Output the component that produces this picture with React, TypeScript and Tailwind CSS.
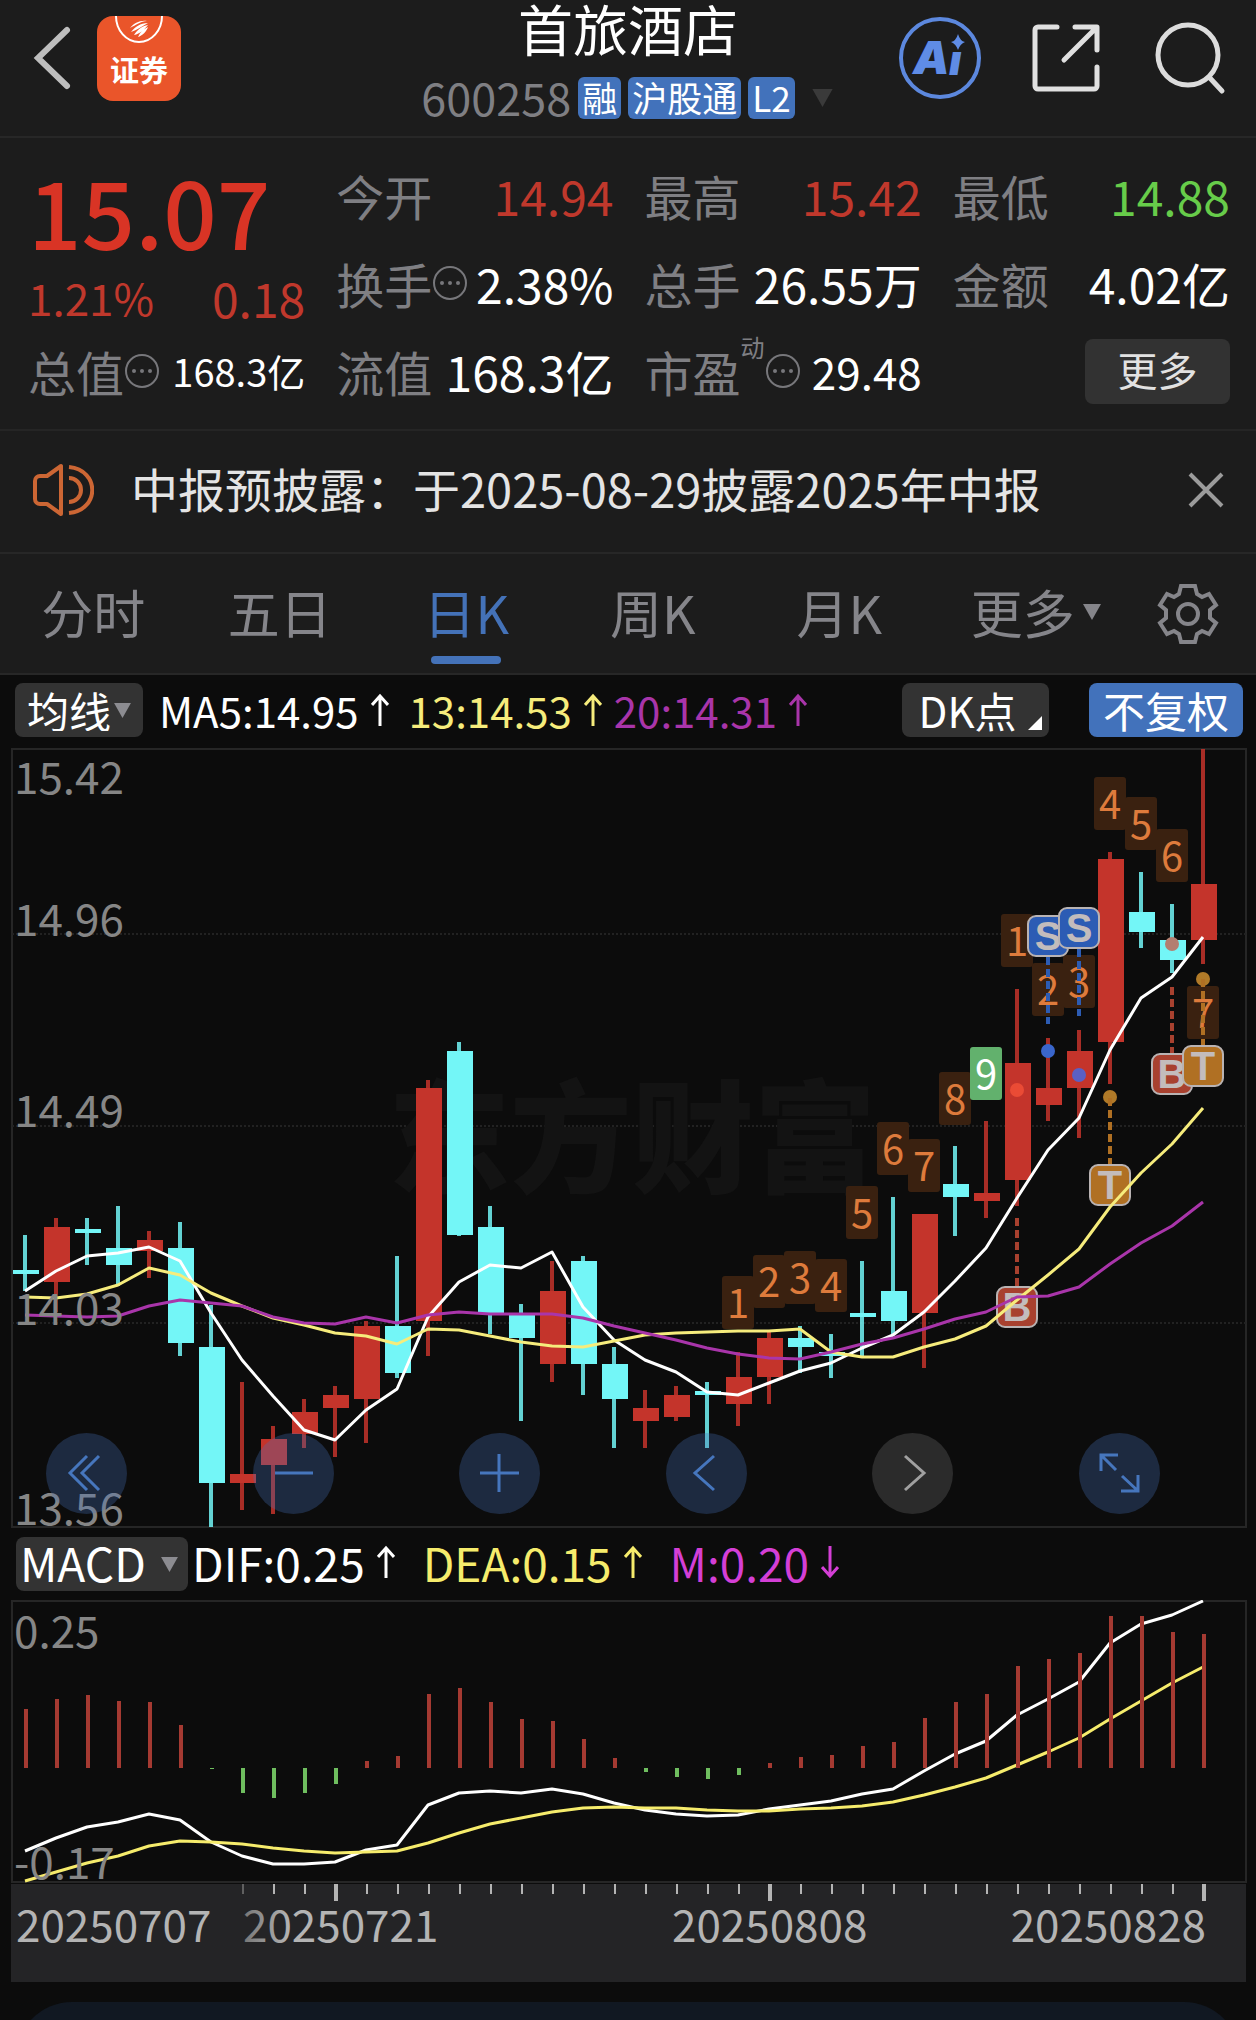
import React, { useState } from "react";

type Candle = [high: number, top: number, bottom: number, low: number, up: 0 | 1];

const STEP = 31;
const xAt = (i: number) => 25 + STEP * i;

const candles: Candle[] = [
  [1235, 1270, 1274, 1291, 0],
  [1218, 1227, 1282, 1312, 1],
  [1218, 1229, 1233, 1265, 0],
  [1206, 1248, 1265, 1286, 0],
  [1231, 1240, 1251, 1278, 1],
  [1222, 1248, 1343, 1356, 0],
  [1305, 1347, 1483, 1527, 0],
  [1382, 1474, 1483, 1510, 1],
  [1426, 1439, 1465, 1514, 1],
  [1399, 1412, 1434, 1448, 1],
  [1386, 1395, 1408, 1457, 1],
  [1321, 1326, 1399, 1443, 1],
  [1256, 1326, 1373, 1378, 0],
  [1080, 1088, 1321, 1356, 1],
  [1042, 1051, 1235, 1236, 0],
  [1206, 1227, 1313, 1334, 0],
  [1304, 1313, 1338, 1421, 0],
  [1261, 1291, 1364, 1382, 1],
  [1256, 1261, 1364, 1395, 0],
  [1347, 1364, 1399, 1448, 0],
  [1390, 1408, 1421, 1448, 1],
  [1386, 1395, 1417, 1421, 1],
  [1382, 1391, 1395, 1448, 0],
  [1352, 1377, 1404, 1426, 1],
  [1332, 1338, 1377, 1404, 1],
  [1326, 1338, 1347, 1373, 0],
  [1334, 1352, 1356, 1378, 0],
  [1261, 1313, 1317, 1356, 0],
  [1197, 1291, 1321, 1334, 0],
  [1214, 1214, 1313, 1368, 1],
  [1146, 1184, 1197, 1236, 0],
  [1121, 1193, 1201, 1218, 1],
  [989, 1063, 1180, 1206, 1],
  [1038, 1088, 1105, 1121, 1],
  [1030, 1051, 1088, 1138, 1],
  [852, 859, 1042, 1084, 1],
  [872, 912, 932, 948, 0],
  [904, 940, 960, 973, 0],
  [749, 884, 940, 964, 1],
];

const ma5 = [
  1291, 1271, 1256, 1253, 1247, 1261, 1313, 1360, 1396, 1430, 1440, 1410, 1389, 1317, 1282, 1265,
  1268, 1252, 1307, 1340, 1360, 1372, 1392, 1395, 1383, 1371, 1363, 1348, 1335, 1312, 1281, 1248,
  1198, 1150, 1118, 1050, 998, 977, 937,
];
const ma13 = [
  1297, 1298, 1294, 1285, 1268, 1275, 1293, 1306, 1318, 1325, 1333, 1336, 1344, 1329, 1330, 1336,
  1342, 1346, 1347, 1341, 1335, 1333, 1332, 1331, 1331, 1329, 1352, 1357, 1357, 1347, 1339, 1326,
  1300, 1275, 1249, 1207, 1173, 1144, 1108,
];
const ma20 = [
  1315, 1316, 1317, 1316, 1306, 1300, 1303, 1306, 1317, 1323, 1324, 1317, 1323, 1315, 1312, 1314,
  1314, 1314, 1318, 1326, 1333, 1340, 1348, 1354, 1358, 1359, 1352, 1344, 1338, 1329, 1319, 1312,
  1297, 1296, 1287, 1264, 1243, 1226, 1202,
];
const dif = [
  1851, 1838, 1827, 1822, 1814, 1820, 1842, 1856, 1864, 1864, 1862, 1850, 1845, 1805, 1793, 1791,
  1793, 1789, 1794, 1803, 1810, 1814, 1816, 1815, 1809, 1805, 1801, 1794, 1789, 1771, 1754, 1741,
  1715, 1699, 1682, 1643, 1624, 1615, 1601,
];
const dea = [
  1881, 1872, 1863, 1856, 1846, 1841, 1842, 1844, 1848, 1851, 1853, 1852, 1851, 1843, 1833, 1824,
  1818, 1812, 1808, 1807, 1808, 1808, 1810, 1811, 1811, 1809, 1808, 1806, 1802, 1795, 1787, 1778,
  1765, 1752, 1738, 1719, 1701, 1683, 1667,
];
const ZERO = 1768;
const macd = [
  1709, 1699, 1695, 1701, 1702, 1725, 1769, 1793, 1798, 1793, 1784, 1761, 1756, 1694, 1688, 1702,
  1719, 1721, 1739, 1758, 1772, 1777, 1779, 1775, 1763, 1757, 1755, 1746, 1742, 1718, 1702, 1694,
  1666, 1659, 1653, 1616, 1616, 1632, 1634,
];

// day counters: [bar, digit, top]
const counters: [number, number, number][] = [
  [23, 1, 1276],
  [24, 2, 1255],
  [25, 3, 1251],
  [26, 4, 1259],
  [27, 5, 1186],
  [28, 6, 1122],
  [29, 7, 1139],
  [30, 8, 1072],
  [31, 9, 1047],
  [32, 1, 914],
  [33, 2, 963],
  [34, 3, 955],
  [35, 4, 777],
  [36, 5, 797],
  [37, 6, 829],
  [38, 7, 986],
];

// trade marks: badge top, dashed stem range and the dot on the fill price
const trades = [
  { bar: 32, mark: "B", top: 1286, from: 1218, to: 1286, dot: 1090, color: "#a8412f", dotColor: "#ea4b35" },
  { bar: 33, mark: "S", top: 915, from: 957, to: 1024, dot: 1051, color: "#2c5cb4", dotColor: "#3a66cc" },
  { bar: 34, mark: "S", top: 907, from: 949, to: 1016, dot: 1075, color: "#2c5cb4", dotColor: "#5a60c4" },
  { bar: 35, mark: "T", top: 1164, from: 1098, to: 1164, dot: 1097, color: "#b07023", dotColor: "#b07a28" },
  { bar: 37, mark: "B", top: 1053, from: 987, to: 1053, dot: 944, color: "#a8412f", dotColor: "#b37e70" },
  { bar: 38, mark: "T", top: 1045, from: 979, to: 1045, dot: 979, color: "#b07023", dotColor: "#b07a28" },
];

const points = (ys: number[]) => ys.map((y, i) => `${xAt(i)},${y}`).join(" ");

const Caret = ({ className = "" }: { className?: string }) => (
  <svg viewBox="0 0 18 16" className={`pointer-events-none shrink-0 ${className}`} aria-hidden="true">
    <path d="M0 0h18l-9 16z" fill="currentColor" />
  </svg>
);

const Arrow = ({ down = false }: { down?: boolean }) => (
  <svg
    viewBox="0 0 18 34"
    className={`ml-3 h-[34px] w-[18px] shrink-0 ${down ? "rotate-180" : ""}`}
    fill="none"
    stroke="currentColor"
    strokeWidth="3">
    <path d="M9 33V3M1 12l8-9 8 9" />
  </svg>
);

const Info = () => (
  <svg viewBox="0 0 36 36" className="size-9 shrink-0" aria-hidden="true">
    <circle cx="18" cy="18" r="16" fill="none" stroke="#77777b" strokeWidth="2" />
    <g fill="#77777b">
      <circle cx="10" cy="18" r="2" />
      <circle cx="18" cy="18" r="2" />
      <circle cx="26" cy="18" r="2" />
    </g>
  </svg>
);

const Header = () => (
  <header className="grid h-[136px] grid-cols-[1fr_auto_1fr]">
    <div className="flex items-start pt-4 pl-8">
      <button aria-label="返回" className="mt-2 mr-[23px]">
        <svg viewBox="0 0 42 68" className="h-[68px] w-[42px]" fill="none" stroke="#bebebe" strokeWidth="6" strokeLinecap="round">
          <path d="M35 6 6 34l29 28" />
        </svg>
      </button>
      <a href="#" className="flex h-[85px] w-[84px] flex-col items-center overflow-hidden rounded-2xl bg-[#ea552a] text-white">
        <svg viewBox="0 0 50 34" className="h-[34px] w-[50px]">
          <path d="M2 0a23 26 0 0 0 46 0" fill="none" stroke="#fff" strokeWidth="2" />
          <path
            d="M16 12c4-5 10-8 17-7-6 0-11 4-17 7zM17 16c4-5 9-9 17-9-6 3-11 7-17 9zM20 19c3-5 8-9 14-10-3 4-8 9-14 10zM24 21c2-5 6-8 10-10-1 4-6 9-10 10z"
            fill="#fff"
          />
        </svg>
        <span className="mt-[5px] text-[29px] leading-none font-bold">证券</span>
      </a>
    </div>
    <div className="flex flex-col items-center">
      <h1 className="text-[55px] leading-[54px] text-white">首旅酒店</h1>
      <div className="mt-[23px] flex h-[42px] items-center gap-[7px] text-[35px] leading-none text-white">
        <span className="pb-1 text-[45px] text-[#7f7f83]">600258</span>
        <span className="flex h-full items-center rounded-md bg-[#4272bb] px-1 pb-1">融</span>
        <span className="flex h-full items-center rounded-md bg-[#4272bb] px-1 pb-1">沪股通</span>
        <span className="flex h-full items-center rounded-md bg-[#4272bb] px-1 pb-1">L2</span>
        <Caret className="ml-2 h-[18px] w-[25px] text-[#3a3a3a]" />
      </div>
    </div>
    <div className="flex items-start justify-end gap-[50px] pt-4 pr-[30px]">
      <button aria-label="AI">
        <svg viewBox="0 0 84 84" className="size-[84px]">
          <circle cx="42" cy="42" r="39" fill="none" stroke="#5c88de" strokeWidth="4" />
          <g fill="#5f8ce6" fontFamily="Inter" fontWeight="900" fontStyle="italic">
            <text x="15" y="58" fontSize="46">
              A
            </text>
            <text x="51" y="59" fontSize="42">
              ı
            </text>
          </g>
          <path d="M60 18q2 7 7 8-5 2-7 8-2-6-7-8 5-1 7-8z" fill="#5f8ce6" />
        </svg>
      </button>
      <button aria-label="分享" className="mt-2">
        <svg viewBox="0 0 68 68" className="size-[68px]" fill="none" stroke="#e0e0e0" strokeWidth="5" strokeLinecap="round" strokeLinejoin="round">
          <path d="M25 3H6a3 3 0 0 0-3 3v56a3 3 0 0 0 3 3h56a3 3 0 0 0 3-3V43M43 3h22v23M64 4 32 36" />
        </svg>
      </button>
      <button aria-label="搜索" className="mt-1">
        <svg viewBox="0 0 76 76" className="size-[76px]" fill="none" stroke="#dcdcdc" strokeWidth="5" strokeLinecap="round">
          <circle cx="38" cy="35" r="30" />
          <path d="m59 57 13 14" />
        </svg>
      </button>
    </div>
  </header>
);

const Stat = ({ label, value, color = "text-white", extra }: { label: string; value: string; color?: string; extra?: React.ReactNode }) => (
  <div className="flex h-[88px] items-center justify-between whitespace-nowrap">
    <dt className="flex items-center text-[#7f7f83]">
      {label}
      {extra}
    </dt>
    <dd className={color}>{value}</dd>
  </div>
);

const Quote = () => (
  <section className="grid grid-cols-4 gap-x-[31px] border-t-2 border-[#272727] pt-[13px] pr-[26px] pb-[14px] pl-[28px] text-[48px] leading-none">
    <div className="text-[#c0382c]">
      <p className="flex h-[115px] items-center text-[94px] font-medium text-[#d93425]">15.07</p>
      <p className="flex h-[61px] items-center justify-between">
        <span className="text-[44px]">1.21%</span>
        <span>0.18</span>
      </p>
      <dl className="flex h-[88px] items-center justify-between whitespace-nowrap">
        <dt className="flex items-center text-[#7f7f83]">
          总值
          <Info />
        </dt>
        <dd className="text-[38px] text-white">168.3亿</dd>
      </dl>
    </div>
    <dl>
      <Stat label="今开" value="14.94" color="text-[#c0382c]" />
      <Stat label="换手" value="2.38%" extra={<Info />} />
      <Stat label="流值" value="168.3亿" />
    </dl>
    <dl>
      <Stat label="最高" value="15.42" color="text-[#c0382c]" />
      <Stat label="总手" value="26.55万" />
      <Stat
        label="市盈"
        value="29.48"
        color="text-[44px] text-white"
        extra={
          <>
            <sup className="-top-6 text-[24px]">动</sup>
            <Info />
          </>
        }
      />
    </dl>
    <div>
      <dl>
        <Stat label="最低" value="14.88" color="text-[#67cc4a]" />
        <Stat label="金额" value="4.02亿" />
      </dl>
      <div className="flex h-[88px] items-center justify-end">
        <button className="h-[65px] w-[145px] rounded-lg bg-[#323232] pb-1 text-[40px] leading-none text-[#e2e2e2]">更多</button>
      </div>
    </div>
  </section>
);

const Notice = () => {
  const [open, setOpen] = useState(true);
  if (!open) return null;

  return (
    <section className="flex h-[123px] items-center border-t-2 border-[#252525] pr-8 pb-1 pl-8">
      <svg viewBox="0 0 62 54" className="h-[54px] w-[62px] shrink-0" fill="none" stroke="#cc6634" strokeWidth="4" strokeLinejoin="round">
        <path d="M29 3v48L15 41H8a5 5 0 0 1-5-5V18a5 5 0 0 1 5-5h7z" />
        <path d="M37 15a12 12 0 0 1 0 24M37 4c31 3 31 43 0 46" />
      </svg>
      <p className="ml-[37px] flex-1 pb-1 text-[47px] leading-none whitespace-nowrap text-[#e4e4e4]">
        中报预披露：于2025-08-29披露2025年中报
      </p>
      <button aria-label="关闭" onClick={() => setOpen(false)}>
        <svg viewBox="0 0 36 36" className="size-9" stroke="#9b9b9b" strokeWidth="4">
          <path d="m2 2 32 32M34 2 2 34" />
        </svg>
      </button>
    </section>
  );
};

const Tabs = () => {
  const [active, setActive] = useState("日K");

  return (
    <nav className="flex h-[123px] items-center border-y-2 border-[#272727] text-[52px] leading-none text-[#85858a]">
      {["分时", "五日", "日K", "周K", "月K"].map((tab) => (
        <button
          key={tab}
          onClick={() => setActive(tab)}
          className={`relative h-full flex-1 pb-1 ${active === tab ? "text-[#4472b8]" : ""}`}>
          {tab}
          {active === tab && <span className="absolute bottom-[9px] left-1/2 h-2 w-[70px] -translate-x-1/2 rounded-full bg-[#4472b8]" />}
        </button>
      ))}
      <button className="flex flex-1 justify-center pb-1">
        <span className="ml-5 flex items-center gap-2">
          更多
          <Caret className="h-4 w-[18px]" />
        </span>
      </button>
      <button aria-label="设置" className="flex w-[137px] justify-center">
        <svg viewBox="-32 -32 64 64" className="size-16" fill="none" stroke="currentColor" strokeWidth="4">
          <path d="M-7-28H7L9-20 14-17 21-20 28-9 22-4V4L28 9 21 20 14 17 9 20 7 28H-7L-9 20-14 17-21 20-28 9-22 4V-4L-28-9-21-20-14-17-9-20z" />
          <circle r="10" />
        </svg>
      </button>
    </nav>
  );
};

const CandleChart = () => (
  <div className="relative">
    <svg viewBox="0 748 1256 780" className="block h-auto w-full" fontFamily="Noto Sans CJK SC, sans-serif">
      <rect x="12" y="749" width="1234" height="778" fill="none" stroke="#262626" strokeWidth="2" />
      {[934, 1126, 1323].map((y) => (
        <path key={y} d={`M12 ${y}H1246`} stroke="#222" strokeWidth="2" strokeDasharray="2 2" />
      ))}
      <text x="388" y="1183" fontSize="122" fontWeight="900" fill="#131313">
        东方财富
      </text>
      {candles.map(([high, top, bottom, low, up], i) => (
        <g key={i} fill={up ? "#c4342b" : "#73f6f7"}>
          <rect x={xAt(i) - 2} y={high} width="4" height={low - high} opacity="0.85" />
          <rect x={xAt(i) - 12} y={top} width="26" height={bottom - top} />
        </g>
      ))}
      {counters.map(([bar, n, top]) => (
        <g key={bar}>
          <rect x={xAt(bar) - 16} y={top} width="32" height="53" rx="3" fill={n === 9 ? "#62b16d" : "#3a2110"} />
          <text x={xAt(bar)} y={top + 42} fontSize="40" textAnchor="middle" fill={n === 9 ? "#fff" : "#de7b3c"}>
            {n}
          </text>
        </g>
      ))}
      {trades.map((t) => (
        <g key={t.bar}>
          <circle cx={xAt(t.bar)} cy={t.dot} r="7" fill={t.dotColor} />
          <path d={`M${xAt(t.bar)} ${t.from}V${t.to}`} stroke={t.color} strokeWidth="4" strokeDasharray="8 4" />
          <rect x={xAt(t.bar) - 20} y={t.top + 1} width="40" height="40" rx="8" fill={t.color} stroke="#b9b3b3" strokeWidth="2" />
          <text
            x={xAt(t.bar)}
            y={t.top + 35}
            fontSize="40"
            fontWeight="700"
            fontFamily="Liberation Sans, sans-serif"
            textAnchor="middle"
            fill="#c3bcbc">
            {t.mark}
          </text>
        </g>
      ))}
      <g fill="none" strokeWidth="3" strokeLinejoin="round">
        <polyline points={points(ma5)} stroke="#fff" />
        <polyline points={points(ma13)} stroke="#f6ec7c" />
        <polyline points={points(ma20)} stroke="#a935aa" />
      </g>
      <g fontSize="44" fill="#868686">
        <text x="14" y="794">15.42</text>
        <text x="14" y="936">14.96</text>
        <text x="14" y="1127">14.49</text>
        <text x="14" y="1325">14.03</text>
        <text x="14" y="1525">13.56</text>
      </g>
    </svg>
    <div className="absolute right-24 bottom-[14px] left-[46px] flex justify-between text-[#4676bd]">
      {[
        { name: "最早", d: "M41 23 24 40l17 17M53 23 36 40l17 17" },
        { name: "缩小", d: "M22 40h38" },
        { name: "放大", d: "M21 40h39M40 21v38" },
        { name: "向左", d: "M48 23 29 40l19 17" },
        { name: "向右", d: "M33 23l19 17-19 17", off: true },
        { name: "全屏", d: "M37 37 23 23M22 38V22h17M43 43l15 14M59 42v16H42" },
      ].map((b) => (
        <button
          key={b.name}
          aria-label={b.name}
          className={`size-[81px] rounded-full ${b.off ? "bg-[#2b2b2b] text-[#a0a0a0]" : "bg-[#4472bb]/30"}`}>
          <svg viewBox="0 0 81 81" fill="none" stroke="currentColor" strokeWidth="3">
            <path d={b.d} />
          </svg>
        </button>
      ))}
    </div>
  </div>
);

const MacdChart = () => (
  <svg viewBox="0 1600 1256 382" className="block h-auto w-full" fontFamily="Noto Sans CJK SC, sans-serif">
    <defs>
      <linearGradient id="fade" gradientUnits="userSpaceOnUse" x1="235" y1="0" x2="290" y2="0">
        <stop offset="0" stopColor="#6c6c6c" />
        <stop offset="1" stopColor="#b4b4b4" />
      </linearGradient>
    </defs>
    <rect x="12" y="1601" width="1234" height="281" fill="none" stroke="#262626" strokeWidth="2" />
    <g fill="none" strokeWidth="3" strokeLinejoin="round">
      <polyline points={points(dif)} stroke="#fff" />
      <polyline points={points(dea)} stroke="#f6ec6c" />
    </g>
    {macd.map((y, i) => (
      <rect
        key={i}
        x={xAt(i) - 1}
        y={Math.min(y, ZERO)}
        width="4"
        height={Math.abs(ZERO - y)}
        fill={y < ZERO ? "#a53a32" : "#6fbe5f"}
      />
    ))}
    <g fontSize="44" fill="#868686">
      <text x="14" y="1648">0.25</text>
      <text x="14" y="1879">-0.17</text>
    </g>
    <rect x="11" y="1884" width="1235" height="98" fill="#242426" />
    {candles.slice(7).map((_, n) => {
      const major = n === 3 || n === 17 || n === 31;
      return (
        <rect
          key={n}
          x={xAt(n + 7) + (major ? -1 : 0)}
          y="1884"
          width={major ? 4 : 2}
          height={major ? 17 : 10}
          fill={n === 0 ? "#606060" : "#b4b4b4"}
        />
      );
    })}
    <g fontSize="44" fill="#b4b4b4">
      <text x="16" y="1942">20250707</text>
      <text x="243" y="1942" fill="url(#fade)">20250721</text>
      <text x="672" y="1942">20250808</text>
      <text x="1206" y="1942" textAnchor="end">20250828</text>
    </g>
  </svg>
);

export default function App() {
  return (
    <main className="min-h-screen overflow-hidden bg-[#0c0c0c] font-['Noto_Sans_CJK_SC',sans-serif]">
      <div className="bg-[#1c1c1c]">
        <Header />
        <Quote />
        <Notice />
        <Tabs />
      </div>

      <div className="flex h-[73px] items-center pr-[13px] pb-1 pl-[15px] text-[42px] leading-none whitespace-nowrap text-white">
        <div className="relative mr-4 h-[54px] w-[128px]">
          <select aria-label="主图指标" className="h-full w-full appearance-none rounded-lg bg-[#333] pl-3 outline-none">
            <option>均线</option>
          </select>
          <Caret className="absolute top-5 right-3 h-[15px] w-[17px] text-[#8c8c91]" />
        </div>
        <span>MA5:14.95</span>
        <Arrow />
        <span className="ml-5 flex items-center text-[#f6ec7c]">
          13:14.53
          <Arrow />
        </span>
        <span className="ml-3 flex items-center text-[#a935aa]">
          20:14.31
          <Arrow />
        </span>
        <button className="relative ml-auto h-[54px] w-[147px] rounded-lg bg-[#333] pr-4">
          DK点
          <svg viewBox="0 0 14 14" className="absolute right-[7px] bottom-[7px] size-[14px]">
            <path d="M14 0v14H0z" fill="#fff" />
          </svg>
        </button>
        <button className="ml-10 h-[54px] w-[154px] rounded-lg bg-[#4272bb]">不复权</button>
      </div>
      <CandleChart />

      <div className="flex h-[72px] items-center pl-4 text-[46px] leading-none whitespace-nowrap text-white">
        <div className="relative mr-1 h-[54px] w-[172px]">
          <select aria-label="副图指标" className="h-full w-full appearance-none rounded-lg bg-[#333] pb-1 pl-1 outline-none">
            <option>MACD</option>
          </select>
          <Caret className="absolute top-5 right-[10px] h-[15px] w-[17px] text-[#8c8c91]" />
        </div>
        <span className="flex items-center pb-1">
          DIF:0.25
          <Arrow />
        </span>
        <span className="ml-7 flex items-center pb-1 text-[#f6ec6c]">
          DEA:0.15
          <Arrow />
        </span>
        <span className="ml-7 flex items-center pb-1 text-[#d43fd6]">
          M:0.20
          <Arrow down />
        </span>
      </div>
      <MacdChart />

      <div className="mt-5 h-[18px] overflow-hidden px-4">
        <div className="h-28 rounded-t-[56px] bg-[#111822]" />
      </div>
    </main>
  );
}
